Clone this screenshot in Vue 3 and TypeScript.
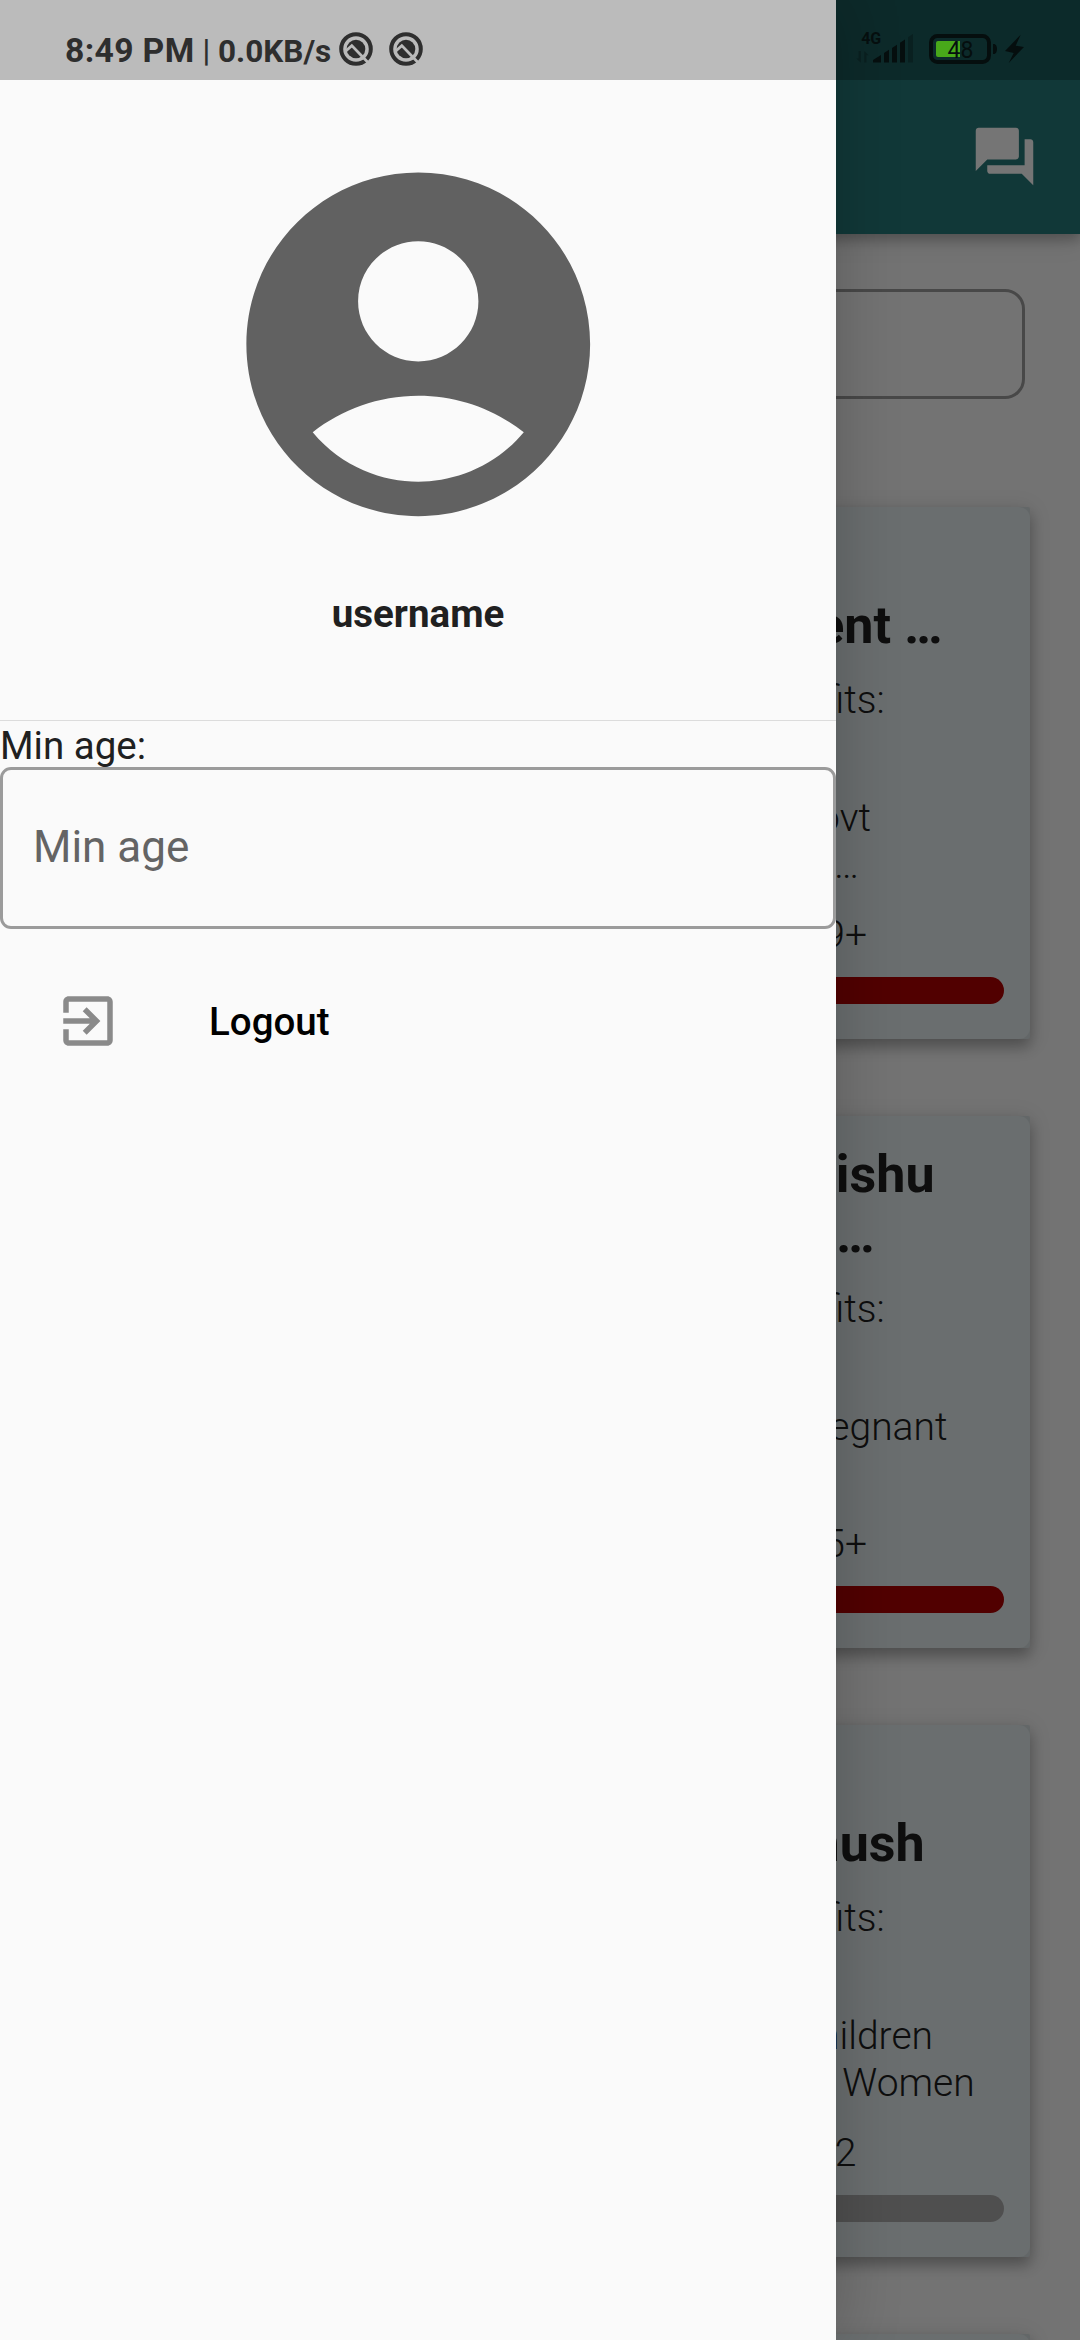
<script setup lang="ts">
interface Line {
  text: string
  inset: number
}

interface Scheme {
  title: Line[]
  benefits: Line
  audience: Line[]
  age: Line
  open: boolean
}

const heading: Line = { text: 'Benefits:', inset: 145.3 }

const schemes: Scheme[] = [
  {
    title: [{ text: 'Government …', inset: 87.5 }],
    benefits: heading,
    audience: [
      { text: 'Govt', inset: 159 },
      { text: 'staff …', inset: 171 },
    ],
    age: { text: '59+', inset: 163 },
    open: false,
  },
  {
    title: [
      { text: 'Janani Shishu', inset: 95.5 },
      { text: 'Suraksha …', inset: 155.5 },
    ],
    benefits: heading,
    audience: [{ text: 'Pregnant', inset: 82.5 }],
    age: { text: '15+', inset: 163 },
    open: false,
  },
  {
    title: [{ text: 'Indradhanush', inset: 105.3 }],
    benefits: heading,
    audience: [
      { text: 'Children', inset: 97 },
      { text: 'and Women', inset: 55.3 },
    ],
    age: { text: '0-2', inset: 173.7 },
    open: true,
  },
]
</script>

<template>
  <div class="screen">
    <main class="page">
      <header class="appbar">
        <svg class="chat" viewBox="0 0 24 24">
          <path d="M21 6h-2v9H6v2c0 .55.45 1 1 1h11l4 4V7c0-.55-.45-1-1-1zm-4 6V3c0-.55-.45-1-1-1H3c-.55 0-1 .45-1 1v14l4-4h10c.55 0 1-.45 1-1z" />
        </svg>
      </header>
      <div class="search"></div>
      <section class="cards">
        <div v-for="(s, i) in schemes" :key="i" class="holder">
          <article class="card">
            <h2 class="title">
              <span v-for="l in s.title" :key="l.text" :style="{ marginRight: l.inset + 'px' }">{{ l.text }}</span>
            </h2>
            <p class="benefits">
              <span :style="{ marginRight: s.benefits.inset + 'px' }">{{ s.benefits.text }}</span>
            </p>
            <p class="audience">
              <span v-for="l in s.audience" :key="l.text" :style="{ marginRight: l.inset + 'px' }">{{ l.text }}</span>
            </p>
            <p class="age">
              <span :style="{ marginRight: s.age.inset + 'px' }">{{ s.age.text }}</span>
            </p>
            <div class="bar" :class="{ open: s.open }"></div>
          </article>
        </div>
        <div class="holder"><article class="card"></article></div>
      </section>
    </main>
    <div class="scrim"></div>

    <aside class="drawer">
      <div class="profile">
        <svg class="avatar" viewBox="0 0 24 24">
          <path d="M12 2C6.48 2 2 6.48 2 12s4.48 10 10 10 10-4.48 10-10S17.52 2 12 2zm0 4c1.93 0 3.5 1.57 3.5 3.5S13.93 13 12 13s-3.5-1.57-3.5-3.5S10.07 6 12 6zm0 14c-2.03 0-4.43-.82-6.14-2.88C7.55 15.8 9.68 15 12 15s4.45.8 6.14 2.12C16.43 19.18 14.03 20 12 20z" />
        </svg>
        <div class="username">username</div>
      </div>
      <label class="label">Min age:</label>
      <div class="field">Min age</div>
      <div class="logout">
        <svg class="exit" viewBox="0 0 24 24">
          <path d="M10.09 15.59L11.5 17l5-5-5-5-1.41 1.41L12.67 11H3v2h9.67l-2.58 2.59zM19 3H5c-1.11 0-2 .9-2 2v4h2V5h14v14H5v-4H3v4c0 1.1.89 2 2 2h14c1.1 0 2-.9 2-2V5c0-1.1-.9-2-2-2z" />
        </svg>
        <span>Logout</span>
      </div>
    </aside>

    <div class="status">
      <span class="time">8:49 PM</span>
      <span class="pipe">|</span>
      <span class="speed">0.0KB/s</span>
      <svg v-for="n in 2" :key="n" class="notif" viewBox="0 0 34 34">
        <circle class="ring" cx="17" cy="17" r="14.8" />
        <circle cx="17" cy="17" r="9.3" />
        <path class="cut" d="M6.500 19.200L12.800 13.600L30 31.500" />
      </svg>
      <span class="grow"></span>
      <svg class="signal" viewBox="0 0 60 40">
        <text x="5.3" y="18.7">4G</text>
        <g class="faint">
          <path d="M2.600 26h2.200v11.700L0.400 33.500h2.200zM8.300 37.500V26l4.200 4.200h-2v7.300z" />
          <path d="M52 12.300l5-3.200v28.400h-5z" />
        </g>
        <path d="M17 37.500v-2.600l8-5v7.600zM28 37.500V28l5-3.200v12.700zM36 37.500V22.900l5-3.200v17.800zM44 37.500V17.700l5-3.200v23z" />
      </svg>
      <svg class="battery" viewBox="0 0 100 32">
        <rect class="shell" x="2" y="3" width="58" height="26" rx="6.5" />
        <path class="charge" d="M9 8h22v16H9a2 2 0 0 1-2-2V10a2 2 0 0 1 2-2z" />
        <path d="M64 11h1.500q2.500 1 2.500 5t-2.500 5H64z" />
        <text x="18.6" y="25">48</text>
        <path d="M91.700 1.700L76 18l8.700 2-5 10L95 14l-8.300-1.300z" />
      </svg>
    </div>
  </div>
</template>

<style>
body {
  margin: 0;
  background: #737373;
}
</style>

<style scoped>
.screen {
  position: relative;
  width: 1080px;
  height: 2340px;
  overflow: hidden;
  font-family: Roboto, 'Liberation Sans', sans-serif;
  color: #202020;
}
.page {
  width: 1080px;
  height: 2340px;
  background: #fafafa;
  overflow: hidden;
}
.appbar {
  position: relative;
  display: flex;
  justify-content: flex-end;
  box-sizing: border-box;
  height: 234px;
  padding: 122px 41px 0 0;
  background: #277a7a;
  box-shadow: 0 6px 11px rgba(0, 0, 0, 0.22), 0 3px 27px rgba(0, 0, 0, 0.14);
}
.chat {
  width: 69px;
  height: 69px;
  fill: #fff;
}
.search {
  box-sizing: border-box;
  height: 110px;
  margin: 55px 55px 0;
  border: 3px solid #9d9d9d;
  border-radius: 20px;
}
.cards {
  display: flex;
  flex-direction: column;
  gap: 77px;
  margin: 108px 50px 0;
}
.holder {
  border-radius: 2px;
  background: #d8e0e2;
  box-shadow: 0 8px 14px rgba(0, 0, 0, 0.25), 0 3px 22px rgba(0, 0, 0, 0.13);
}
.card {
  box-sizing: border-box;
  height: 532px;
  padding-top: 29px;
  border-radius: 11px;
  background: #e6eff1;
}
.title,
.benefits,
.audience,
.age {
  display: flex;
  flex-direction: column;
  align-items: flex-end;
  margin: 0;
  white-space: nowrap;
}
.title {
  justify-content: flex-end;
  height: 120px;
  font-size: 52px;
  line-height: 60px;
  font-weight: 700;
}
.benefits,
.audience,
.age {
  font-size: 39px;
  line-height: 47px;
  font-weight: 300;
}
.benefits {
  height: 47px;
  margin-top: 21px;
}
.audience {
  height: 94px;
  margin-top: 71px;
}
.age {
  height: 47px;
  margin-top: 23px;
}
.bar {
  height: 27px;
  margin: 18px 26px 0;
  border-radius: 14px;
  background: #b00000;
}
.bar.open {
  background: #adadad;
}
.scrim {
  position: absolute;
  inset: 0;
  background: rgba(0, 0, 0, 0.54);
}
.drawer {
  position: absolute;
  inset: 0 auto 0 0;
  width: 836px;
  background: #fafafa;
  box-shadow: 0 0 60px rgba(0, 0, 0, 0.22);
}
.profile {
  display: flex;
  flex-direction: column;
  align-items: center;
  box-sizing: border-box;
  height: 721px;
  padding-top: 137.5px;
  border-bottom: 1px solid #dcdcdc;
}
.avatar {
  width: 412.5px;
  height: 412.5px;
  fill: #616161;
}
.username {
  margin-top: 41px;
  font-size: 38.5px;
  line-height: 45px;
  font-weight: 700;
}
.label {
  display: block;
  height: 46px;
  font-size: 38.5px;
  line-height: 49px;
}
.field {
  box-sizing: border-box;
  height: 162px;
  padding-left: 30px;
  border: 3px solid #9b9b9b;
  border-radius: 11px;
  font-size: 44px;
  line-height: 154px;
  color: #646464;
}
.logout {
  display: flex;
  align-items: center;
  height: 66px;
  margin-top: 59px;
  padding-left: 55px;
  font-size: 38.5px;
  font-weight: 500;
  color: #000;
}
.exit {
  width: 66px;
  height: 66px;
  margin-right: 88px;
  fill: #8a8a8a;
}
.status {
  position: absolute;
  inset: 0 0 auto 0;
  display: flex;
  align-items: flex-start;
  box-sizing: border-box;
  height: 80px;
  padding-left: 65px;
  background: rgba(0, 0, 0, 0.25);
  white-space: pre;
  color: #2e2e2e;
}
.time {
  width: 137.5px;
  margin-top: 31px;
  font-size: 33.7px;
  line-height: 40px;
  letter-spacing: 0.35px;
  font-weight: 700;
}
.pipe {
  width: 15.5px;
  margin-top: 32px;
  font-size: 31px;
  line-height: 38px;
  font-weight: 500;
}
.speed {
  width: 121px;
  margin-top: 32px;
  font-size: 31.5px;
  line-height: 40px;
  font-weight: 700;
}
.notif {
  width: 34px;
  height: 34px;
  margin: 32px 16px 0 0;
  fill: #2e2e2e;
}
.ring,
.cut {
  fill: none;
  stroke: #2e2e2e;
  stroke-width: 4;
}
.cut {
  stroke: #bbb;
  stroke-width: 2.8;
}
.grow {
  flex: 1;
}
.signal {
  width: 60px;
  height: 40px;
  margin: 25px 13px 0 0;
  fill: #050e0e;
}
.signal text {
  font-size: 16px;
  font-weight: 700;
  letter-spacing: -0.3px;
}
.faint {
  opacity: 0.35;
}
.battery {
  width: 100px;
  height: 32px;
  margin: 33px 51px 0 0;
  fill: #050e0e;
}
.battery text {
  font-size: 23px;
}
.shell {
  fill: none;
  stroke: #050e0e;
  stroke-width: 4;
}
.charge {
  fill: #48a81a;
}
</style>
